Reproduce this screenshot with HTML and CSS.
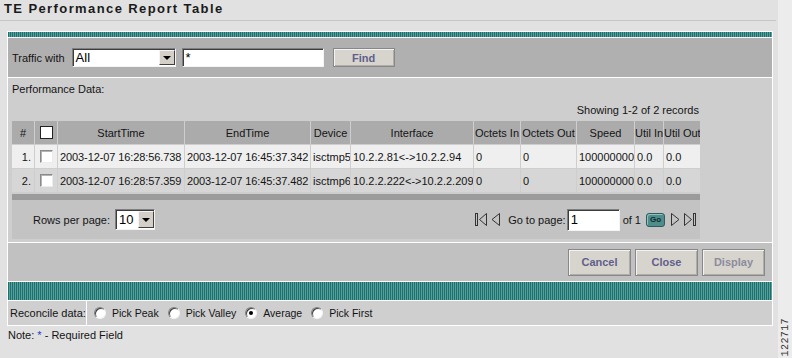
FILE: index.html
```html
<!DOCTYPE html>
<html>
<head lang="en">
<meta charset="UTF-8">
<title>TE Performance Report Table</title>
<link rel="stylesheet" href="styles.css">
</head>
<body>
<div class="screen">
<div class="main">
    <h1 class="title">TE Performance Report Table</h1>
    <div class="panel">
        <div class="stripe"></div>
        <div class="filter">
            <span>Traffic with</span>
            <div class="select wide"><span class="val">All</span><span class="drop"></span></div>
            <div class="textbox search">*</div>
            <button class="btn find">Find</button>
        </div>
        <div class="content">
            <div class="caption">Performance Data:</div>
            <div class="records">Showing 1-2 of 2 records</div>
            <table class="grid">
                <colgroup>
                    <col class="c-num"><col class="c-cb"><col class="c-start"><col class="c-end"><col class="c-dev">
                    <col class="c-if"><col class="c-oin"><col class="c-oout"><col class="c-speed"><col class="c-uin"><col class="c-uout">
                </colgroup>
                <tr>
                    <th>#</th><th><span class="cb head"></span></th><th>StartTime</th><th>EndTime</th><th>Device</th>
                    <th>Interface</th><th>Octets In</th><th>Octets Out</th><th>Speed</th><th>Util In</th><th>Util Out</th>
                </tr>
                <tr class="odd">
                    <td class="num">1.</td><td class="mid"><span class="cb"></span></td>
                    <td class="time">2003-12-07 16:28:56.738</td><td class="time">2003-12-07 16:45:37.342</td>
                    <td>isctmp5</td><td>10.2.2.81&lt;-&gt;10.2.2.94</td><td>0</td><td>0</td><td>100000000</td><td>0.0</td><td>0.0</td>
                </tr>
                <tr class="even">
                    <td class="num">2.</td><td class="mid"><span class="cb"></span></td>
                    <td class="time">2003-12-07 16:28:57.359</td><td class="time">2003-12-07 16:45:37.482</td>
                    <td>isctmp6</td><td>10.2.2.222&lt;-&gt;10.2.2.209</td><td>0</td><td>0</td><td>100000000</td><td>0.0</td><td>0.0</td>
                </tr>
            </table>
            <div class="gridfoot"></div>
            <div class="pager">
                <div class="rows">
                    <span>Rows per page:</span>
                    <div class="select small"><span class="val">10</span><span class="drop"></span></div>
                </div>
                <div class="nav">
                    <svg class="ico first" width="12" height="13" viewBox="0 0 12 13"><rect x="0.5" y="0.5" width="2" height="12" fill="none" stroke="#333"/><path d="M11.5 0.5 L4.5 6.5 L11.5 12.5 Z" fill="none" stroke="#333"/></svg>
                    <svg class="ico prev" width="9" height="13" viewBox="0 0 9 13"><path d="M8.5 0.5 L1 6.5 L8.5 12.5 Z" fill="none" stroke="#333"/></svg>
                    <span class="goto">Go to page:</span>
                    <div class="textbox page">1</div>
                    <span class="of">of 1</span>
                    <span class="go">Go</span>
                    <svg class="ico next" width="9" height="13" viewBox="0 0 9 13"><path d="M0.5 0.5 L8 6.5 L0.5 12.5 Z" fill="none" stroke="#333"/></svg>
                    <svg class="ico last" width="12" height="13" viewBox="0 0 12 13"><path d="M0.5 0.5 L7.5 6.5 L0.5 12.5 Z" fill="none" stroke="#333"/><rect x="9.5" y="0.5" width="2" height="12" fill="none" stroke="#333"/></svg>
                </div>
            </div>
        </div>
        <div class="actions">
            <button class="btn act">Cancel</button>
            <button class="btn act">Close</button>
            <button class="btn act off">Display</button>
        </div>
        <div class="stripe tall"></div>
        <div class="reconcile">
            <div class="label">Reconcile data:</div>
            <span class="radio"></span><span class="opt">Pick Peak</span>
            <span class="radio"></span><span class="opt">Pick Valley</span>
            <span class="radio on"></span><span class="opt">Average</span>
            <span class="radio"></span><span class="opt">Pick First</span>
        </div>
    </div>
    <div class="note">Note: <span class="req">*</span> - Required Field</div>
</div>
<div class="side"><span class="figno">122717</span></div>
</div>
</body>
</html>
```

FILE: styles.css
```css
*{
    margin: 0;
    padding: 0;
}
body{
    background: #e1e1e1;
    font-family: "Liberation Sans", Arial, sans-serif;
    font-size: 11px;
    color: #141414;
}
.screen{
    display: flex;
    width: 792px;
    height: 358px;
    overflow: hidden;
}
.main{
    width: 778px;
}
.side{
    width: 14px;
    background: #ececec;
    display: flex;
    flex-direction: column;
    justify-content: flex-end;
    align-items: center;
    padding-bottom: 2px;
    box-sizing: border-box;
}
.figno{
    writing-mode: vertical-rl;
    transform: rotate(180deg);
    font-family: "Liberation Mono", monospace;
    font-size: 10px;
    letter-spacing: 0.4px;
    color: #333;
}

.title{
    width: 772px;
    height: 20px;
    border-bottom: 1px solid #c6c6c6;
    padding-left: 4px;
    line-height: 18px;
    font-size: 13px;
    font-weight: bold;
    letter-spacing: 1.4px;
    color: #1a1a1a;
}

.panel{
    margin: 10px 0 0 7px;
    width: 764px;
    border: 1px solid #fff;
}
.stripe{
    height: 5px;
    background: repeating-linear-gradient(90deg, #216f6d 0 1px, #54a09d 1px 2px);
}
.stripe.tall{
    height: 18px;
    border-top: 1px solid #fff;
    border-bottom: 1px solid #fff;
}

.filter{
    height: 39px;
    border-top: 1px solid #fff;
    border-bottom: 1px solid #fff;
    background: #b1b0b0;
    display: flex;
    align-items: center;
    padding-left: 4px;
}

.select{
    display: flex;
    box-sizing: border-box;
    background: #fff;
    border: 1px solid;
    border-color: #7f7f7f #f4f4f4 #f4f4f4 #7f7f7f;
    box-shadow: inset 1px 1px 0 #3c3c3c;
}
.select .val{
    flex: 1;
    padding: 1px 0 0 3px;
    font-size: 13px;
    color: #000;
}
.select .drop{
    width: 16px;
    margin: 1px 0 1px 0;
    box-sizing: border-box;
    background: #d4d0c8;
    border: 1px solid;
    border-color: #f4f4f4 #404040 #404040 #f4f4f4;
    display: flex;
    align-items: center;
    justify-content: center;
}
.select .drop:after{
    content: "";
    border-left: 4px solid transparent;
    border-right: 4px solid transparent;
    border-top: 4px solid #000;
}
.select.wide{
    width: 104px;
    height: 19px;
    margin-left: 7px;
}
.select.wide .val{
    line-height: 15px;
}
.select.small{
    width: 40px;
    height: 21px;
    margin-left: 5px;
}
.select.small .val{
    line-height: 17px;
}

.textbox{
    box-sizing: border-box;
    background: #fff;
    border: 1px solid;
    border-color: #7f7f7f #f4f4f4 #f4f4f4 #7f7f7f;
    box-shadow: inset 1px 1px 0 #3c3c3c;
    font-size: 13px;
    color: #000;
    padding-left: 3px;
}
.textbox.search{
    width: 142px;
    height: 19px;
    margin-left: 6px;
    line-height: 17px;
}
.textbox.page{
    width: 53px;
    height: 22px;
    line-height: 20px;
}

.btn{
    font-family: "Liberation Sans", Arial, sans-serif;
    font-size: 11px;
    font-weight: bold;
    color: #5f5f8b;
    background: #d7d4cd;
    border: 1px solid #888;
    box-shadow: inset 1px 1px 0 #f3f3f3, inset -1px -1px 0 #b0ada6;
}
.btn.find{
    width: 62px;
    height: 19px;
    margin-left: 9px;
}
.btn.act{
    width: 63px;
    height: 27px;
}
.btn.off{
    color: #8c8c9c;
}

.content{
    background: #cecece;
    padding: 0 0 3px 3px;
}
.caption{
    height: 22px;
    line-height: 22px;
    padding-left: 1px;
}
.records{
    width: 688px;
    height: 20px;
    line-height: 20px;
    text-align: right;
}

.grid{
    width: 690px;
    table-layout: fixed;
    border-spacing: 1px;
}
.c-num, .c-cb{ width: 22px; }
.c-start{ width: 126px; }
.c-end{ width: 125px; }
.c-dev{ width: 39px; }
.c-if{ width: 122px; }
.c-oin{ width: 46px; }
.c-oout{ width: 55px; }
.c-speed{ width: 57px; }
.c-uin{ width: 28px; }
.c-uout{ width: 36px; }
.grid th{
    height: 23px;
    padding: 0;
    background: #ababab;
    font-weight: normal;
    text-align: center;
    white-space: nowrap;
    overflow: hidden;
}
.grid td{
    height: 23px;
    padding: 0 0 0 2px;
    white-space: nowrap;
    overflow: hidden;
}
.grid tr.odd td{
    background: #efefef;
}
.grid tr.even td{
    background: #d6d6d6;
}
.grid td.num{
    text-align: right;
    padding: 0 3px 0 0;
}
.grid td.mid{
    text-align: center;
    padding: 0;
}
.grid td.time{
    letter-spacing: -0.1px;
}
.cb{
    display: inline-block;
    vertical-align: middle;
    width: 13px;
    height: 13px;
    box-sizing: border-box;
    background: #fff;
    border: 1px solid;
    border-color: #8a8a8a #ececec #ececec #8a8a8a;
    box-shadow: inset 1px 1px 0 #b4b4b4;
}
.cb.head{
    border-color: #222;
    box-shadow: none;
}

.gridfoot{
    margin: 1px 0 0 1px;
    width: 688px;
    height: 6px;
    background: #9b9b9b;
}
.pager{
    margin-left: 1px;
    width: 688px;
    height: 39px;
    box-sizing: border-box;
    padding: 0 4px 0 21px;
    background: #c3c3c3;
    display: flex;
    align-items: center;
    justify-content: space-between;
}
.rows, .nav{
    display: flex;
    align-items: center;
}
.ico.first{ margin-right: 4px; }
.ico.prev{ margin-right: 8px; }
.goto{ margin-right: 1px; }
.of{ margin-left: 3px; }
.go{
    margin-left: 5px;
    width: 19px;
    height: 14px;
    box-sizing: border-box;
    border-radius: 3px;
    background: #4f8d8c;
    border: 1px solid #2c5c5b;
    box-shadow: inset 1px 1px 0 #8fc0be;
    font-size: 8px;
    font-weight: bold;
    color: #0d2b2b;
    display: flex;
    align-items: center;
    justify-content: center;
}
.ico.next{ margin-left: 6px; }
.ico.last{ margin-left: 4px; }

.actions{
    height: 38px;
    border-top: 1px solid #fff;
    background: #c1c1c1;
    display: flex;
    justify-content: flex-end;
    align-items: center;
    gap: 4px;
    padding-right: 7px;
}

.reconcile{
    height: 24px;
    background: #cfcfcf;
    display: flex;
    align-items: center;
}
.reconcile .label{
    width: 79px;
    height: 24px;
    line-height: 24px;
    box-sizing: border-box;
    padding-left: 2px;
    border-right: 1px solid #fff;
}
.radio{
    width: 12px;
    height: 12px;
    box-sizing: border-box;
    border-radius: 50%;
    background: #fff;
    border: 1px solid;
    border-color: #808080 #f4f4f4 #f4f4f4 #808080;
    box-shadow: inset 1px 1px 0 #404040;
    display: flex;
    align-items: center;
    justify-content: center;
    margin-left: 9px;
}
.reconcile .label + .radio{
    margin-left: 7px;
}
.radio.on:after{
    content: "";
    width: 4px;
    height: 4px;
    border-radius: 50%;
    background: #000;
}
.opt{
    margin-left: 6px;
    font-size: 10.5px;
}

.note{
    margin-top: 1px;
    padding-left: 8px;
    line-height: 16px;
}
.req{
    color: #1a3ad0;
}
```
